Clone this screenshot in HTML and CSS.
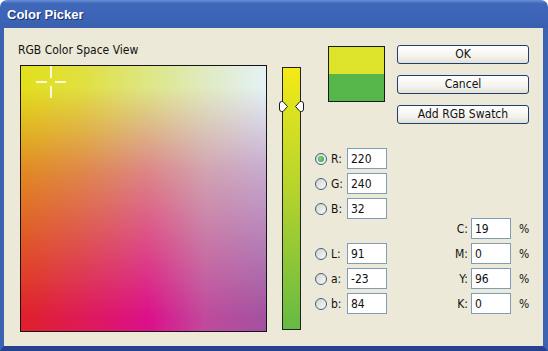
FILE: index.html
```html
<!DOCTYPE html>
<html lang="en">
<head>
  <meta charset="UTF-8" />
  <meta name="viewport" content="width=device-width, initial-scale=1.0" />
  <title>Color Picker</title>
  <link rel="stylesheet" href="styles.css">
</head>
<body>
  <div class="window">
    <div class="titlebar"><span>Color Picker</span></div>
    <div class="client">
      <div class="view">
        <div class="view-label">RGB Color Space View</div>
        <div class="field">
          <svg class="crosshair" width="32" height="33" viewBox="0 0 32 33">
            <path d="M16 0V12M16 20V32M1 16H12M20 16H31" stroke="#fbf8e2" stroke-width="2" fill="none" />
          </svg>
        </div>
      </div>

      <div class="slider">
        <div class="thumb">
          <svg width="9" height="11" viewBox="0 0 9 11">
            <path d="M2.5 .5H4L8.5 5.5L4 10.5H2.5Q.5 10.5 .5 8V3Q.5 .5 2.5 .5Z" fill="#fff" stroke="#1a1a1a" />
          </svg>
          <svg width="9" height="11" viewBox="0 0 9 11">
            <path d="M6.5 .5H5L.5 5.5L5 10.5H6.5Q8.5 10.5 8.5 8V3Q8.5 .5 6.5 .5Z" fill="#fff" stroke="#1a1a1a" />
          </svg>
        </div>
      </div>

      <div class="side">
        <div class="top">
          <div class="swatch">
            <div class="swatch-new"></div>
            <div class="swatch-old"></div>
          </div>
          <div class="buttons">
            <button>OK</button>
            <button>Cancel</button>
            <button>Add RGB Swatch</button>
          </div>
        </div>

        <div class="values">
          <div class="color-col">
            <div class="group">
              <div class="row"><span class="radio checked"></span><span class="label">R:</span><input type="text" value="220"></div>
              <div class="row"><span class="radio"></span><span class="label">G:</span><input type="text" value="240"></div>
              <div class="row"><span class="radio"></span><span class="label">B:</span><input type="text" value="32"></div>
            </div>
            <div class="group">
              <div class="row"><span class="radio"></span><span class="label">L:</span><input type="text" value="91"></div>
              <div class="row"><span class="radio"></span><span class="label">a:</span><input type="text" value="-23"></div>
              <div class="row"><span class="radio"></span><span class="label">b:</span><input type="text" value="84"></div>
            </div>
          </div>
          <div class="cmyk-col">
            <div class="row"><span class="cmyk-label">C:</span><input type="text" value="19"><span class="pct">%</span></div>
            <div class="row"><span class="cmyk-label">M:</span><input type="text" value="0"><span class="pct">%</span></div>
            <div class="row"><span class="cmyk-label">Y:</span><input type="text" value="96"><span class="pct">%</span></div>
            <div class="row"><span class="cmyk-label">K:</span><input type="text" value="0"><span class="pct">%</span></div>
          </div>
        </div>
      </div>
    </div>
  </div>
</body>
</html>
```

FILE: styles.css
```css
body {
  margin: 0;
  background: #fff;
  font-family: Tahoma, "DejaVu Sans Condensed", "DejaVu Sans", sans-serif;
  font-size: 12px;
  color: #111;
}
.window {
  width: 548px;
  height: 351px;
  display: flex;
  flex-direction: column;
}
.titlebar {
  height: 28px;
  flex: none;
  display: flex;
  align-items: center;
  padding-left: 7px;
  border-radius: 7px 7px 0 0;
  background: linear-gradient(#6a90d8, #4068ba 12%, #3c63b5 70%, #3a5fae);
  color: #fff;
  font-family: "Liberation Sans", sans-serif;
  font-weight: bold;
  font-size: 13px;
  text-shadow: 1px 1px 0 #1b3271;
}
.client {
  flex: 1;
  display: flex;
  align-items: flex-start;
  background: #ece9d8;
  border: solid #3c62b2;
  border-width: 0 5px 5px 4px;
  border-bottom-color: #24428f;
}
.view {
  margin-left: 14px;
  padding-top: 16px;
}
.view-label {
  height: 13px;
  line-height: 13px;
}
.field {
  position: relative;
  width: 245px;
  height: 265px;
  margin: 8px 0 0 2px;
  border: 1px solid #151515;
  background: linear-gradient(to right, #e0202a, #de1a58 25%, #dc108a 52%, #c04a9c 75%, #a2529f);
}
.field::before {
  content: "";
  position: absolute;
  inset: 0;
  background: linear-gradient(to right, #e2e01c, #e0e040 25%, #dde680 50%, #e0eac0 75%, #e4f2f6);
  -webkit-mask-image: linear-gradient(#000 8%, rgba(0, 0, 0, .55) 40%, transparent 95%);
  mask-image: linear-gradient(#000 8%, rgba(0, 0, 0, .55) 40%, transparent 95%);
}
.crosshair {
  position: absolute;
  left: 14px;
  top: 0;
}
.slider {
  position: relative;
  width: 17px;
  height: 261px;
  margin: 39px 0 0 15px;
  border: 1px solid #222;
  background: linear-gradient(#f6ea14, #dce220 16%, #b8d42c 45%, #8cc638 75%, #66ba44);
}
.thumb {
  position: absolute;
  left: -4px;
  right: -4px;
  top: 33px;
  display: flex;
  justify-content: space-between;
}
.thumb svg {
  display: block;
}
.side {
  margin-left: 14px;
  padding-top: 17px;
}
.top {
  display: flex;
  align-items: flex-start;
}
.swatch {
  width: 55px;
  height: 54px;
  margin: 1px 0 0 13px;
  border: 1px solid #1a1a1a;
  display: flex;
  flex-direction: column;
}
.swatch-new {
  flex: 1;
  background: #dde32b;
}
.swatch-old {
  flex: 1;
  background: #56b649;
}
.buttons {
  margin-left: 12px;
  display: flex;
  flex-direction: column;
  gap: 11px;
}
.buttons button {
  width: 132px;
  height: 19px;
  padding: 0;
  border: 1px solid #1e3f72;
  border-radius: 3px;
  background: linear-gradient(#fff, #f4f3ee 60%, #e3e0d6);
  font-family: inherit;
  font-size: 12px;
  color: #111;
  line-height: 17px;
}
.values {
  display: flex;
  align-items: flex-end;
  margin-top: 24px;
}
.color-col {
  display: flex;
  flex-direction: column;
  gap: 24px;
}
.group, .cmyk-col {
  display: flex;
  flex-direction: column;
  gap: 4px;
}
.row {
  display: flex;
  align-items: center;
  height: 21px;
}
.radio {
  width: 10px;
  height: 10px;
  margin-right: 4px;
  border: 1px solid #3e5f8c;
  border-radius: 50%;
  background: linear-gradient(135deg, #d4d3cc, #fafaf8);
  position: relative;
}
.radio.checked::after {
  content: "";
  position: absolute;
  left: 2px;
  top: 2px;
  width: 6px;
  height: 6px;
  border-radius: 50%;
  background: radial-gradient(circle at 40% 40%, #7fd67f, #21a121);
}
.label {
  width: 16px;
}
.row input {
  width: 40px;
  height: 21px;
  box-sizing: border-box;
  margin: 0;
  padding: 0 3px;
  border: 1px solid #7f9db9;
  background: #fff;
  font-family: inherit;
  font-size: 12px;
  color: #111;
}
.cmyk-col {
  margin-left: 61px;
}
.cmyk-label {
  width: 20px;
  padding-right: 3px;
  text-align: right;
}
.pct {
  margin-left: 8px;
}
```
